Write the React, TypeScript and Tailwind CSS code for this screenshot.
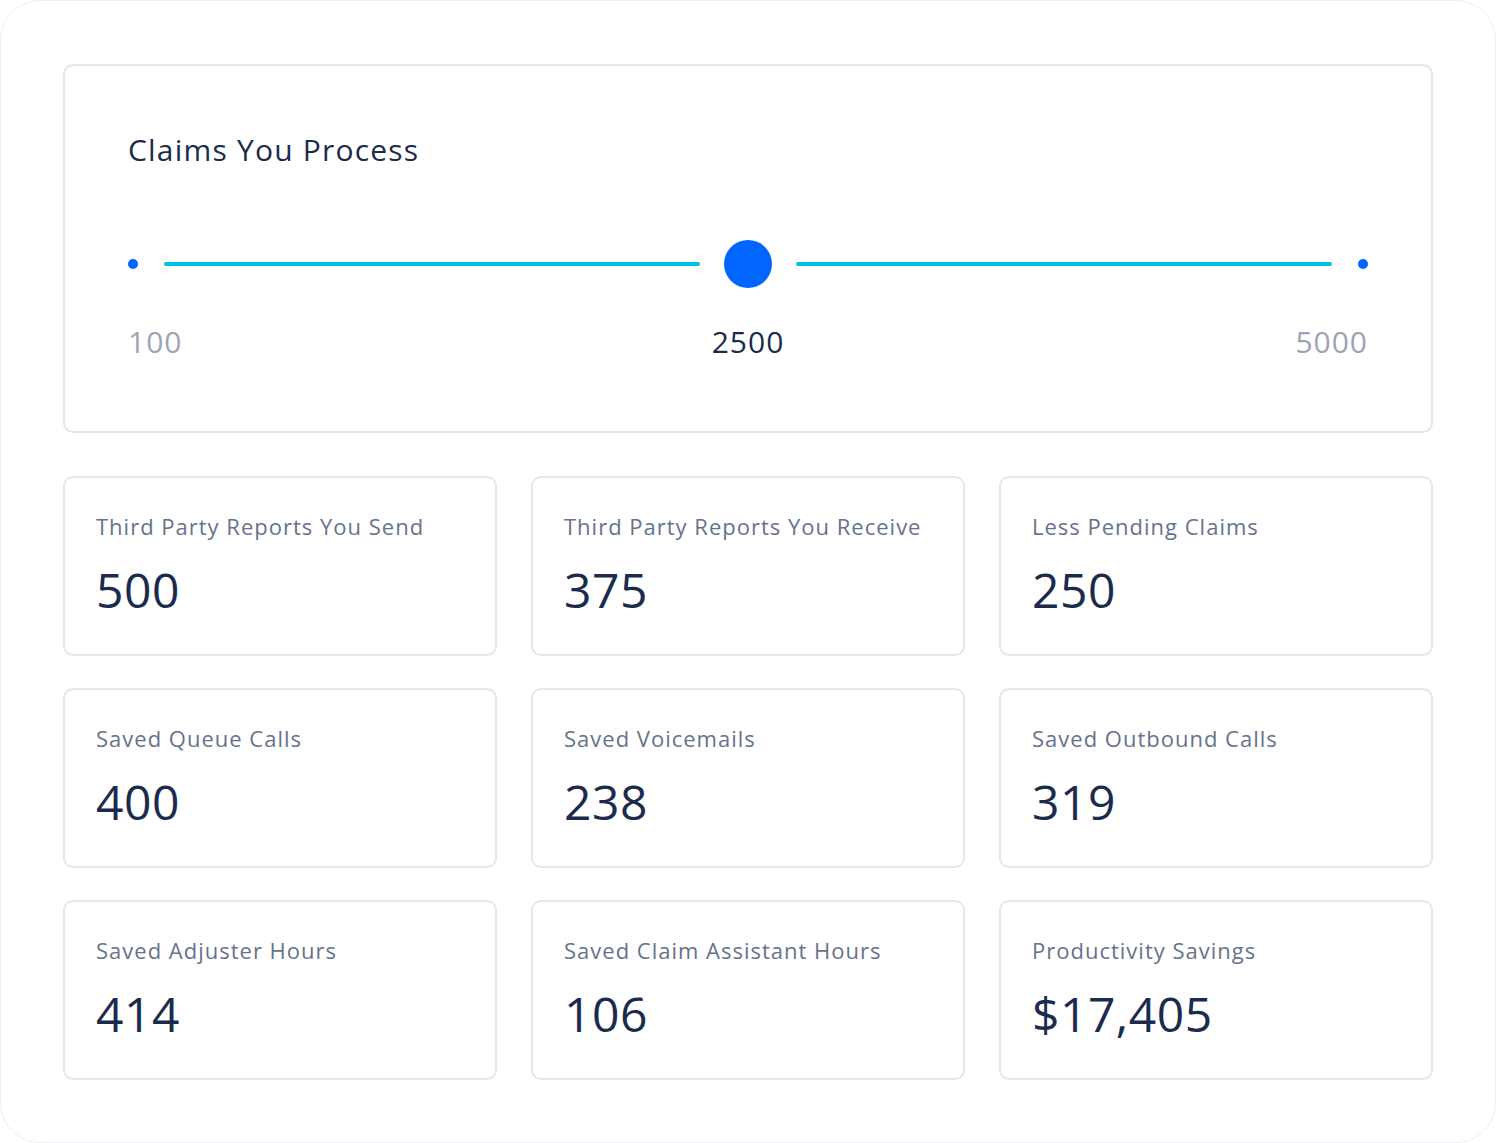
const stats = [
  { label: "Third Party Reports You Send", value: "500" },
  { label: "Third Party Reports You Receive", value: "375" },
  { label: "Less Pending Claims", value: "250" },
  { label: "Saved Queue Calls", value: "400" },
  { label: "Saved Voicemails", value: "238" },
  { label: "Saved Outbound Calls", value: "319" },
  { label: "Saved Adjuster Hours", value: "414" },
  { label: "Saved Claim Assistant Hours", value: "106" },
  { label: "Productivity Savings", value: "$17,405" },
];

function StatCard({ label, value }: { label: string; value: string }) {
  return (
    <div className="h-[180px] rounded-[10px] border-2 border-[#e3e7ee] bg-white px-[31px] pt-[34px]">
      <p className="whitespace-nowrap text-[22px] leading-[28px] tracking-[1px] text-[#66738c]">{label}</p>
      <p className="mt-[22px] text-[48px] leading-[56px] tracking-[0.5px] text-[#1b2b4d]">{value}</p>
    </div>
  );
}

export default function App() {
  return (
    <div
      className="min-h-[1143px] w-[1496px] rounded-[40px] border border-[#eceef2] bg-white px-[62px] pt-[63px] pb-[62px]"
      style={{ fontFamily: "'Open Sans', sans-serif" }}
    >
      {/* Slider card */}
      <div className="h-[369px] rounded-[10px] border-2 border-[#e3e7ee] px-[63px] pt-[66px]">
        <h2 className="text-[30px] leading-[36px] tracking-[1.2px] text-[#1b2b4d]">Claims You Process</h2>
        <div className="mt-[72px] flex h-[48px] items-center">
          <span className="h-[10px] w-[10px] shrink-0 rounded-full bg-[#0066ff]" />
          <span className="ml-[26px] h-[4px] flex-1 rounded-full bg-[#00c2e4]" />
          <span className="mx-[24px] h-[48px] w-[48px] shrink-0 rounded-full bg-[#0066ff]" />
          <span className="mr-[26px] h-[4px] flex-1 rounded-full bg-[#00c2e4]" />
          <span className="h-[10px] w-[10px] shrink-0 rounded-full bg-[#0066ff]" />
        </div>
        <div className="mt-[36px] grid grid-cols-3 text-[30px] leading-[36px] tracking-[1px]">
          <span className="text-[#9ba4b5]">100</span>
          <span className="text-center text-[#1b2b4d]">2500</span>
          <span className="text-right text-[#9ba4b5]">5000</span>
        </div>
      </div>

      {/* Stats */}
      <div className="mt-[43px] grid grid-cols-3 gap-x-[34px] gap-y-[32px]">
        {stats.map((s) => (
          <StatCard key={s.label} label={s.label} value={s.value} />
        ))}
      </div>
    </div>
  );
}
